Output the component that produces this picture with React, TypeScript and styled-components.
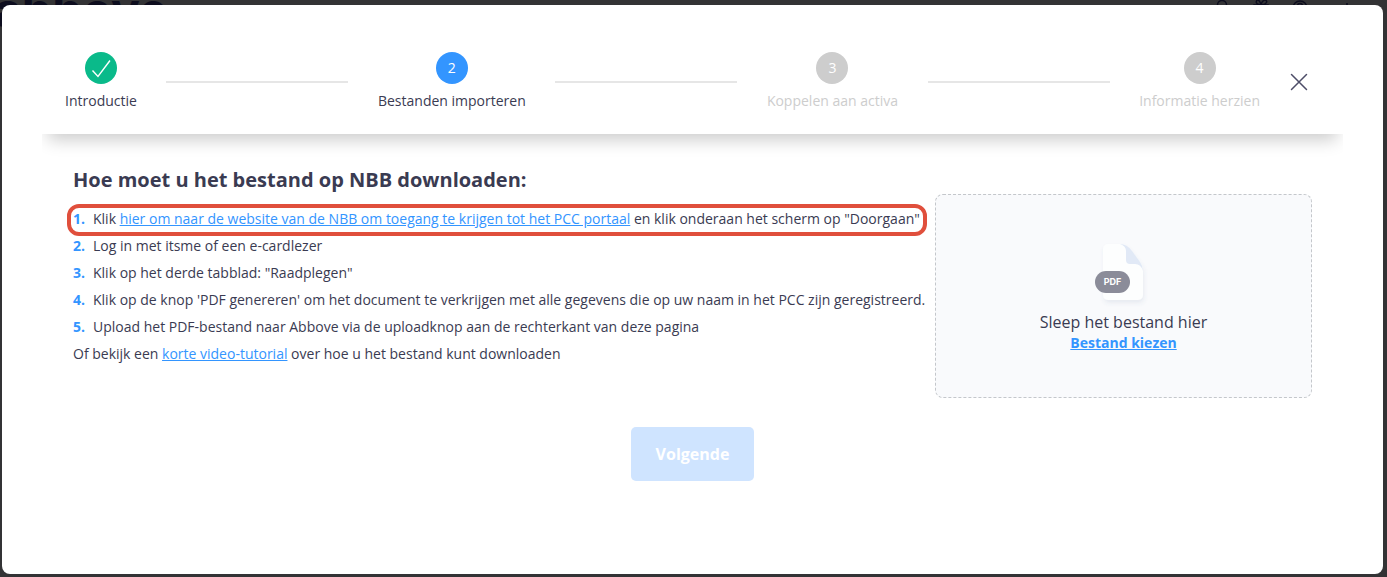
import React from "react";
import styled, { createGlobalStyle } from "styled-components";

const GlobalStyle = createGlobalStyle`
  * { box-sizing: border-box; }
  body {
    margin: 0;
    background: #333335;
    color: #3a3b52;
    font-family: "Open Sans", sans-serif;
    font-size: 14px;
    line-height: 20px;
  }
  a { color: #3395ff; text-underline-offset: 1px; }
`;

const Page = styled.div`
  position: relative;
  min-height: 100vh;
  display: flex;
  padding: 5px 4px 3px 2px;
  overflow: hidden;
`;

const Backdrop = styled.div`
  position: absolute;
  inset: 0 0 auto 0;
  display: flex;
  justify-content: space-between;
  color: #0d0d1e;
`;

const Brand = styled.span`
  margin: -20px 0 0 -6px;
  font-family: Inter, sans-serif;
  font-size: 48px;
  line-height: 60px;
  font-weight: 700;
`;

const Modal = styled.main`
  position: relative;
  flex: 1;
  min-width: 0;
  padding: 24px 40px;
  border-radius: 8px;
  background: #fff;
`;

const Header = styled.header`
  display: flex;
  align-items: center;
  padding: 23px 33px 23px 23px;
  box-shadow: 0 12px 16px -6px rgba(0, 0, 0, 0.2);
  clip-path: inset(0 0 -26px 0);
`;

const Steps = styled.ol`
  flex: 1;
  display: flex;
  align-items: center;
  justify-content: space-between;
  gap: 8px;
  margin: 0;
  padding: 0;
  list-style: none;
`;

const Step = styled.li<{ $muted?: boolean }>`
  display: flex;
  flex-direction: column;
  align-items: center;
  gap: 7px;
  white-space: nowrap;
  color: ${(p) => (p.$muted ? "#cdcdcd" : "inherit")};
`;

const Badge = styled.span<{ $color: string }>`
  display: grid;
  place-items: center;
  width: 32px;
  height: 32px;
  border-radius: 50%;
  background: ${(p) => p.$color};
  color: #fff;
`;

const Connector = styled.li`
  width: 182px;
  height: 2px;
  background: #e6e6e6;
`;

const CloseButton = styled.button`
  display: grid;
  margin-left: 28px;
  padding: 0;
  border: 0;
  background: none;
  color: #4d4d68;
`;

const Content = styled.div`
  display: flex;
  align-items: flex-start;
  gap: 24px;
  padding: 31px 31px 0;
`;

const Guide = styled.section`
  flex: 1;
  min-width: 0;
  white-space: nowrap;
`;

const Title = styled.h1`
  margin: 0 0 14px;
  font-size: 20px;
  line-height: 30px;
  font-weight: 700;
`;

const Instructions = styled.ol`
  margin: 0;
  padding: 0;
  list-style: none;
  counter-reset: step;
`;

const Instruction = styled.li`
  position: relative;
  display: flex;
  margin-bottom: 7px;
  counter-increment: step;
  &::before {
    content: counter(step) ".";
    flex: none;
    width: 20px;
    color: #3395ff;
    font-weight: 700;
  }
`;

const Highlight = styled.span`
  position: absolute;
  inset: -5px -16px -7px -6px;
  border: 4px solid #e04f3c;
  border-radius: 12px;
  pointer-events: none;
`;

const Note = styled.p`
  margin: 0;
`;

const DropZone = styled.section`
  flex: none;
  display: flex;
  flex-direction: column;
  align-items: center;
  justify-content: center;
  width: 377px;
  height: 204px;
  margin-top: 29px;
  border: 1px dashed #c4c7cb;
  border-radius: 8px;
  background: #f9fafc;
`;

const DropText = styled.p`
  margin: 3px 0 0;
  font-size: 16px;
  line-height: 22px;
`;

const PickLink = styled.a`
  font-weight: 700;
`;

const Actions = styled.div`
  display: flex;
  justify-content: center;
  padding-top: 29px;
`;

const NextButton = styled.button`
  padding: 16px 25px;
  border: 0;
  border-radius: 5px;
  background: #cfe4ff;
  color: #fff;
  font: 700 16px/22px "Open Sans", sans-serif;
`;

const ToolbarIcons = () => (
  <svg width="187" height="16" viewBox="0 0 187 16" fill="none" stroke="currentColor" strokeWidth="1.5">
    <circle cx="22" cy="5" r="4.5" />
    <path d="M61 5C58 5 55.500 3 56.500 1S60 0 61 5C62 0 65.500-1 66.500 1S64 5 61 5ZM54 5H68V15H54Z" />
    <circle cx="100" cy="8" r="7" />
    <path d="M97.500 6A2.500 2.500 0 0 1 102.500 6" />
    <path d="M147 3V6" />
  </svg>
);

const PdfIcon = () => (
  <svg width="64" height="68" viewBox="0 0 64 68" aria-hidden="true">
    <defs>
      <filter id="soft" x="-30%" y="-30%" width="160%" height="170%">
        <feDropShadow dx="1" dy="3" stdDeviation="2" floodColor="#50648c" floodOpacity="0.1" />
      </filter>
    </defs>
    <path d="M16 4H28C33 4 36 7 40 12L49 24Q51 27 51 31V55A5 5 0 0 1 46 60H16A5 5 0 0 1 11 55V9A5 5 0 0 1 16 4Z" fill="#fdfefe" filter="url(#soft)" />
    <path d="M28 4Q35 4 40 11L48 22Q51 26 51 31Q49 24 43 24H38Q34 24 34 20V11Q34 6 28 4Z" fill="#e1e9f6" />
    <rect x="3" y="31" width="35" height="22" rx="11" fill="#8b8c99" />
    <text x="20.5" y="45" fill="#fff" fontFamily="Inter, sans-serif" fontSize="9" fontWeight="700" textAnchor="middle">PDF</text>
  </svg>
);

export default function App() {
  return (
    <>
      <GlobalStyle />
      <Page>
        <Backdrop aria-hidden="true">
          <Brand>abbove</Brand>
          <ToolbarIcons />
        </Backdrop>
        <Modal>
          <Header>
            <Steps>
              <Step>
                <Badge $color="#0aba8a">
                  <svg width="20" height="20" viewBox="0 0 20 20" fill="none" stroke="#fff" strokeWidth="1.4" aria-label="Voltooid">
                    <path d="M1.500 12.500 7 18.500 19 2.500" />
                  </svg>
                </Badge>
                Introductie
              </Step>
              <Connector aria-hidden="true" />
              <Step aria-current="step"><Badge $color="#3395ff">2</Badge>Bestanden importeren</Step>
              <Connector aria-hidden="true" />
              <Step $muted><Badge $color="#cdcdcd">3</Badge>Koppelen aan activa</Step>
              <Connector aria-hidden="true" />
              <Step $muted><Badge $color="#cdcdcd">4</Badge>Informatie herzien</Step>
            </Steps>
            <CloseButton aria-label="Sluiten">
              <svg width="22" height="22" viewBox="0 0 22 22" fill="none" stroke="currentColor" strokeWidth="1.5" strokeLinecap="round">
                <path d="M3.500 3.500 18.500 18.500M18.500 3.500 3.500 18.500" />
              </svg>
            </CloseButton>
          </Header>
          <Content>
            <Guide>
              <Title>Hoe moet u het bestand op NBB downloaden:</Title>
              <Instructions>
                <Instruction>
                  <span>Klik <a href="#nbb">hier om naar de website van de NBB om toegang te krijgen tot het PCC portaal</a> en klik onderaan het scherm op "Doorgaan"</span>
                  <Highlight />
                </Instruction>
                <Instruction>Log in met itsme of een e-cardlezer</Instruction>
                <Instruction>Klik op het derde tabblad: "Raadplegen"</Instruction>
                <Instruction>Klik op de knop 'PDF genereren' om het document te verkrijgen met alle gegevens die op uw naam in het PCC zijn geregistreerd.</Instruction>
                <Instruction>Upload het PDF-bestand naar Abbove via de uploadknop aan de rechterkant van deze pagina</Instruction>
              </Instructions>
              <Note>Of bekijk een <a href="#video">korte video-tutorial</a> over hoe u het bestand kunt downloaden</Note>
            </Guide>
            <DropZone>
              <PdfIcon />
              <DropText>Sleep het bestand hier</DropText>
              <PickLink href="#kiezen">Bestand kiezen</PickLink>
            </DropZone>
          </Content>
          <Actions><NextButton disabled>Volgende</NextButton></Actions>
        </Modal>
      </Page>
    </>
  );
}
